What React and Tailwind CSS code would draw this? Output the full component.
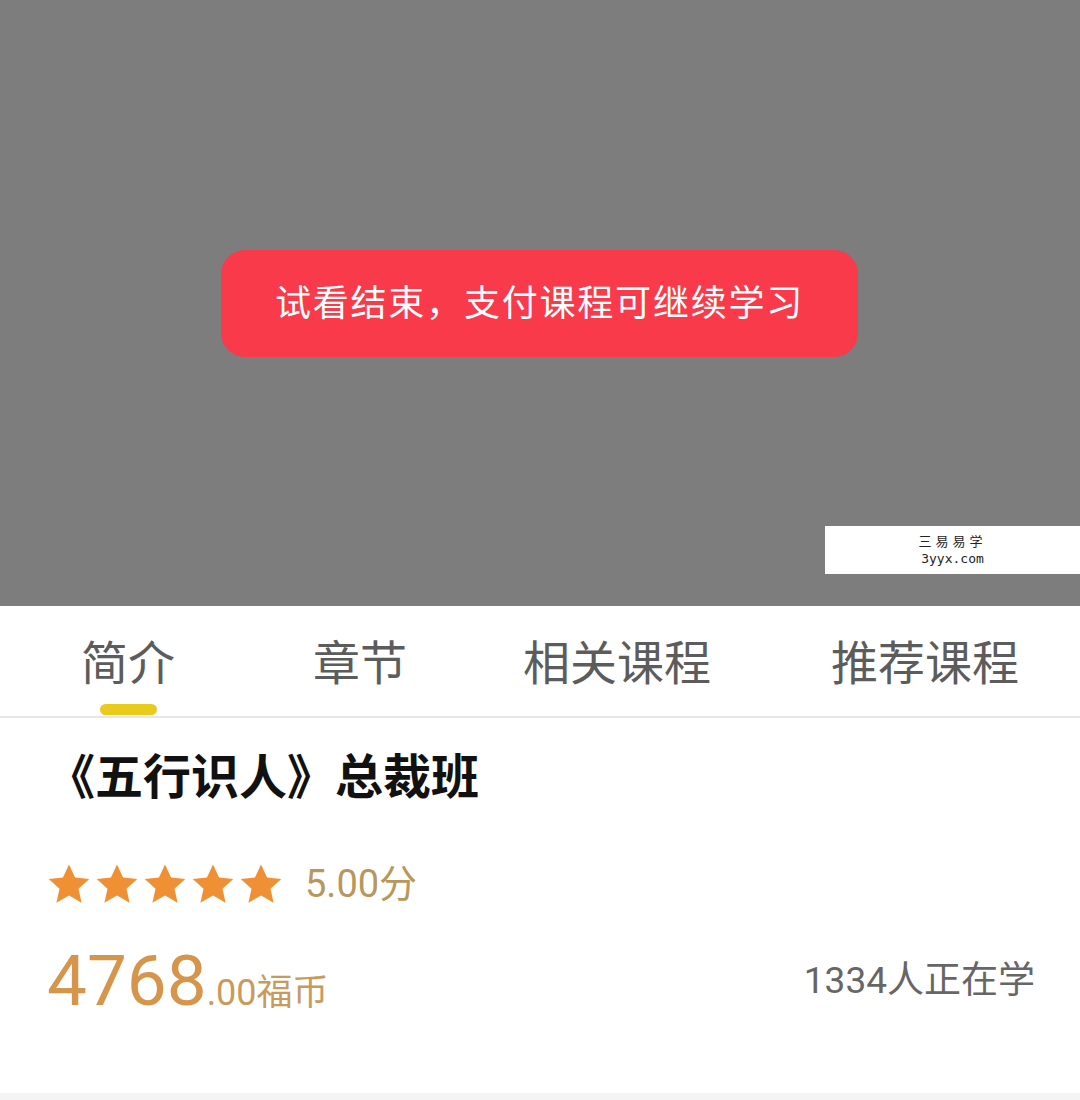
const cjk = { fontFamily: 'Roboto, "Noto Sans CJK SC", sans-serif' };

const tabs = [
  { label: "简介", active: true, ml: "ml-[81px]" },
  { label: "章节", ml: "ml-[138px]" },
  { label: "相关课程", ml: "ml-[116px]" },
  { label: "推荐课程", ml: "ml-[120px]" },
];

function Star() {
  return (
    <svg width="44" height="42" viewBox="0 0 24 23">
      <path
        d="M12 0.8l3.3 7.2 7.8.8-5.9 5.3 1.7 7.7L12 17.8l-6.9 4 1.7-7.7L.9 8.8l7.8-.8z"
        fill="#ef9035"
      />
    </svg>
  );
}

export default function App() {
  return (
    <div className="w-[1080px] h-[1100px] bg-white flex flex-col" style={cjk}>
      {/* player */}
      <div className="h-[606px] bg-[#7d7d7d] flex flex-col relative">
        <div className="mt-[250px] ml-[221px] w-[637px] h-[107px] rounded-[24px] bg-[#f83a4a] flex items-center justify-center">
          <span className="text-white text-[36px] leading-none tracking-[1.8px]">
            试看结束，支付课程可继续学习
          </span>
        </div>
        <div className="absolute left-[825px] top-[526px] w-[255px] h-[48px] bg-white flex flex-col items-center justify-center">
          <span
            className="text-[13px] leading-[18px] text-[#222] tracking-[4px]"
            style={{ fontFamily: '"Noto Sans CJK SC", serif' }}
          >
            三易易学
          </span>
          <span
            className="text-[13px] leading-[18px] text-[#222]"
            style={{ fontFamily: '"DejaVu Sans Mono", monospace' }}
          >
            3yyx.com
          </span>
        </div>
      </div>

      {/* tabs */}
      <div className="h-[112px] flex items-start border-b-2 border-[#e6e6e6]">
        {tabs.map((t) => (
          <div key={t.label} className={`${t.ml} flex flex-col items-center`}>
            <span className="mt-[30px] text-[47px] leading-[56px] text-[#5c5c5c]">
              {t.label}
            </span>
            {t.active && (
              <div className="mt-[12px] w-[57px] h-[11px] rounded-full bg-[#e9cb1c]" />
            )}
          </div>
        ))}
      </div>

      {/* info */}
      <div className="flex flex-col pl-[47px] pr-[45px]">
        <h1 className="mt-[30px] text-[48px] leading-[60px] font-bold text-[#111]">
          《五行识人》总裁班
        </h1>
        <div className="mt-[55px] flex items-center">
          <div className="flex gap-[4px]">
            <Star />
            <Star />
            <Star />
            <Star />
            <Star />
          </div>
          <span className="ml-[22px] text-[38px] leading-none text-[#b8975c]">
            5.00分
          </span>
        </div>
        <div className="mt-[36px] flex items-baseline justify-between">
          <div className="flex items-baseline text-[#d5954a]">
            <span className="text-[71px] leading-[80px]">4768</span>
            <span className="text-[36px] leading-none text-[#c89b5d]">.00福币</span>
          </div>
          <span className="text-[37px] leading-none text-[#666] relative top-[-12px]">
            1334人正在学
          </span>
        </div>
      </div>
      <div className="flex-1" />
      <div className="h-[7px] bg-[#f4f4f4]" />
    </div>
  );
}
